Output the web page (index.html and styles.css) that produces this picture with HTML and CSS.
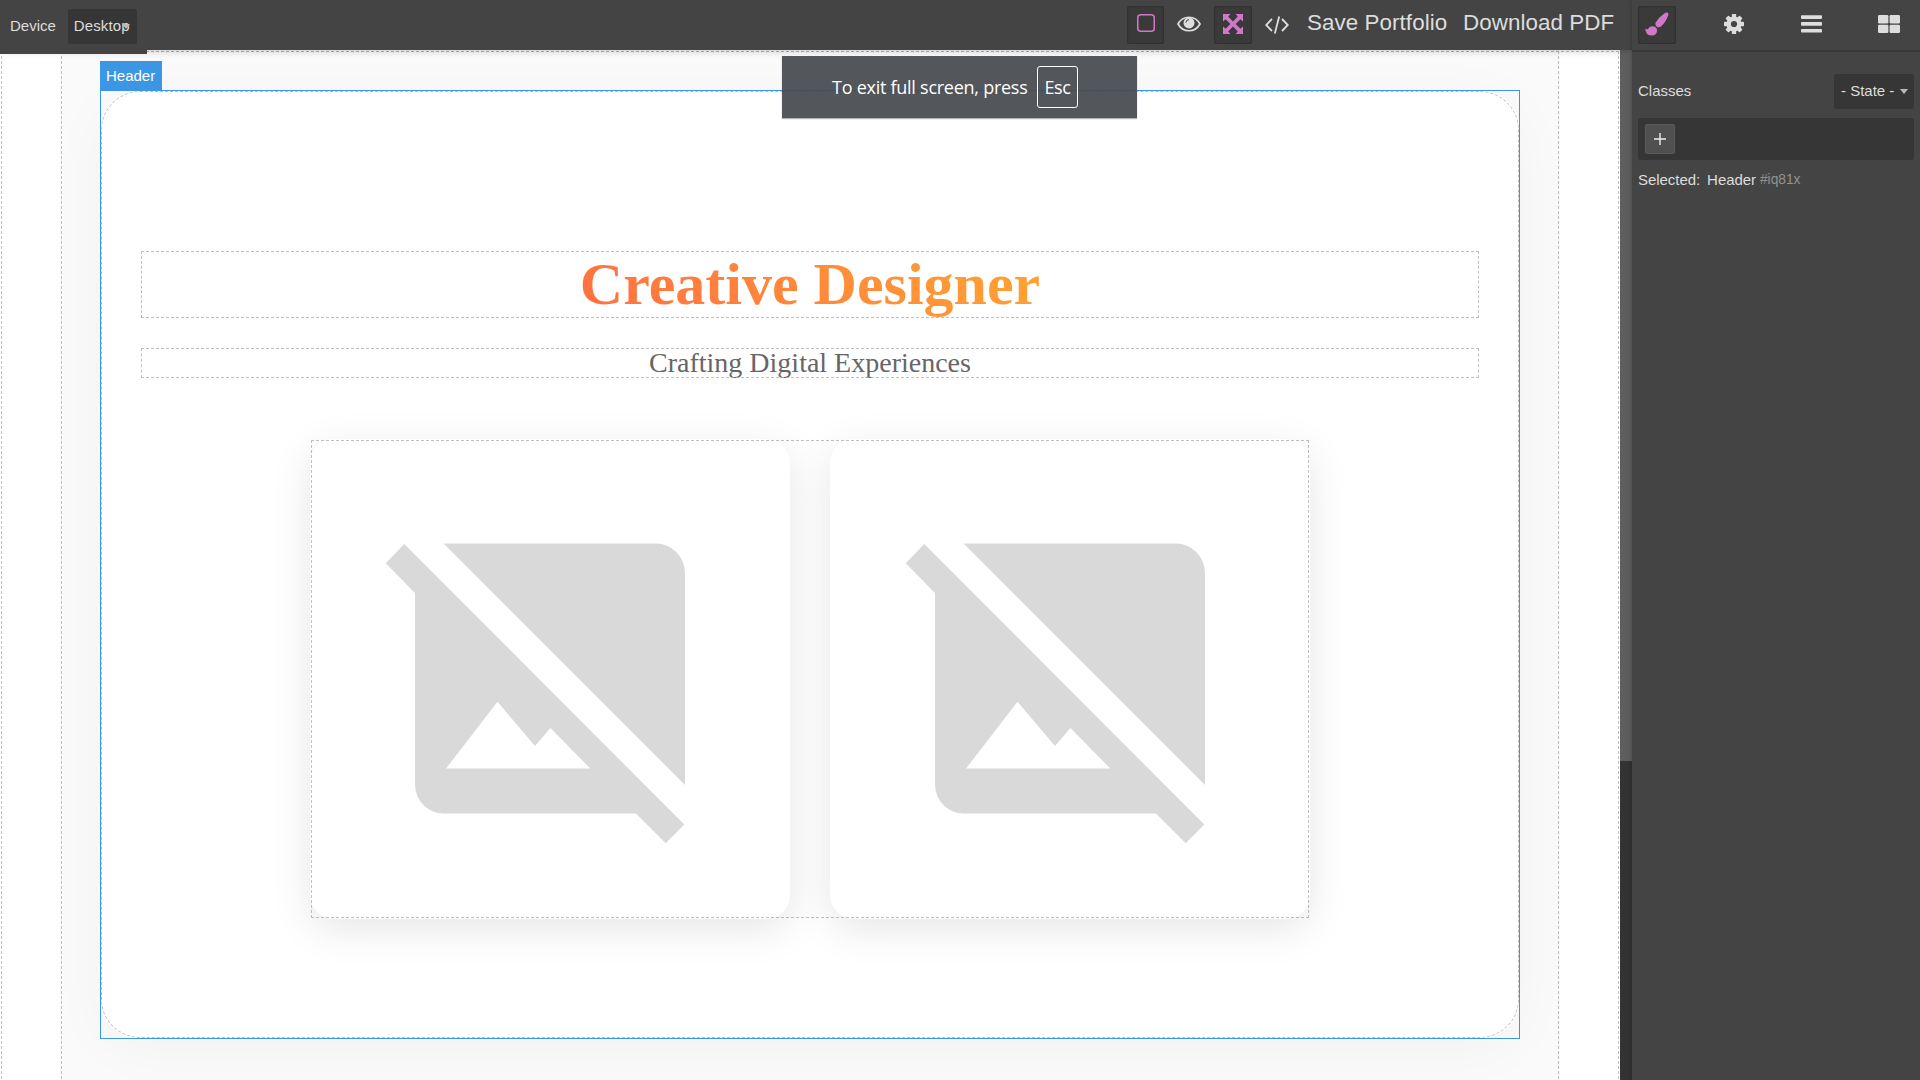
FILE: index.html
```
<!DOCTYPE html>
<html lang="en">
<head>
<meta charset="utf-8">
<title>Portfolio Editor</title>
<link rel="stylesheet" href="styles.css">
</head>
<body>
<div class="editor">
  <div class="main">
    <header class="topbar">
      <div class="devices">
        <span class="devices-label">Device</span>
        <div class="select device-select"><span>Desktop</span><i class="caret"></i></div>
      </div>
      <nav class="actions">
        <button class="tool active tool-outline"><svg viewBox="0 0 18 18" width="18" height="18"><rect x=".75" y=".75" width="16.5" height="16.5" rx="3" fill="none" stroke="currentColor" stroke-width="1.5"/></svg></button>
        <button class="tool tool-eye"><svg viewBox="0 0 24 16" width="24" height="16"><path d="M1 8C6-1 18-1 23 8C18 17 6 17 1 8Z" fill="none" stroke="currentColor" stroke-width="1.7"/><circle cx="12" cy="6.9" r="5.5" fill="currentColor"/><path d="M8.9 6.7A3.2 3.2 0 0 1 12 3.6" fill="none" stroke="#444" stroke-width="1"/></svg></button>
        <button class="tool active tool-full"><svg viewBox="0 0 20 20" width="20" height="20"><path d="M0 0H7.5L5.2 2.6L10 7.4L14.8 2.6L12.5 0H20V7.5L17.4 5.2L12.6 10L17.4 14.8L20 12.5V20H12.5L14.8 17.4L10 12.6L5.2 17.4L7.5 20H0V12.5L2.6 14.8L7.4 10L2.6 5.2L0 7.5Z" fill="currentColor"/></svg></button>
        <button class="tool tool-code"><svg viewBox="0 0 24 18" width="24" height="18"><path d="M7 3L1.2 9L7 15M17 3L22.8 9L17 15M14.2.5L9.8 17.5" fill="none" stroke="currentColor" stroke-width="1.8"/></svg></button>
        <span class="text-action save">Save Portfolio</span>
        <span class="text-action download">Download PDF</span>
      </nav>
    </header>
    <div class="canvas">
      <div class="page dashed">
        <div class="container dashed">
          <section class="hero dashed">
            <h1 class="hero-title dashed"><span class="gradient">Creative Designer</span></h1>
            <p class="hero-subtitle dashed">Crafting Digital Experiences</p>
            <div class="gallery dashed">
              <div class="card"><svg viewBox="0 0 480 480" width="480" height="480" fill="#d9d9d9"><path d="M94.3 104.9L75.7 124.2L105 153.9V345.3A28.6 29.3 0 0 0 133.6 374.6H326L355.7 404.2L374.3 385.6Z"/><path d="M133.6 104.6H346A29 29.5 0 0 1 375 134V346Z"/><path fill="#fff" d="M136 329.6L187.5 262.8L225 307L240.4 288.9L280.4 329.6Z"/></svg></div>
              <div class="card"><svg viewBox="0 0 480 480" width="480" height="480" fill="#d9d9d9"><path d="M94.3 104.9L75.7 124.2L105 153.9V345.3A28.6 29.3 0 0 0 133.6 374.6H326L355.7 404.2L374.3 385.6Z"/><path d="M133.6 104.6H346A29 29.5 0 0 1 375 134V346Z"/><path fill="#fff" d="M136 329.6L187.5 262.8L225 307L240.4 288.9L280.4 329.6Z"/></svg></div>
            </div>
            <span class="badge">Header</span>
          </section>
        </div>
      </div>
      <div class="scrollbar"><div class="thumb"></div></div>
    </div>
  </div>
  <aside class="panel">
    <nav class="tabs">
      <button class="tool active"><svg viewBox="0 0 24 24" width="24" height="24" fill="currentColor"><path d="M21.5.6Q24 .8 23.3 3.2Q20.5 10.5 16 14.5Q13.8 16 11.8 14.8Q9.8 13 10.5 10.8Q14 5 19.5 1.2Q20.5.5 21.5.6Z"/><path d="M.2 16.5Q1.5 18 3 16.9Q4.3 14.4 7 14.2Q11.5 14.4 12.2 18.2Q11.8 23.4 6.5 23.6Q.3 23 .2 16.5Z"/></svg></button>
      <button class="tool"><svg viewBox="-10 -10 20 20" width="20" height="20"><g fill="currentColor"><circle r="7.6"/><rect x="-2.2" y="-10" width="4.4" height="20" rx=".8"/><rect x="-2.2" y="-10" width="4.4" height="20" rx=".8" transform="rotate(45)"/><rect x="-2.2" y="-10" width="4.4" height="20" rx=".8" transform="rotate(90)"/><rect x="-2.2" y="-10" width="4.4" height="20" rx=".8" transform="rotate(135)"/></g><circle r="3.1" fill="#444"/></svg></button>
      <button class="tool"><svg viewBox="0 0 21 18" width="21" height="18" fill="currentColor"><rect y=".3" width="21" height="3.6" rx=".8"/><rect y="7.1" width="21" height="3.6" rx=".8"/><rect y="13.9" width="21" height="3.6" rx=".8"/></svg></button>
      <button class="tool"><svg viewBox="0 0 22 18" width="22" height="18" fill="currentColor"><rect width="10.4" height="8.5" rx="1.3"/><rect x="11.6" width="10.4" height="8.5" rx="1.3"/><rect y="9.7" width="10.4" height="8.3" rx="1.3"/><rect x="11.6" y="9.7" width="10.4" height="8.3" rx="1.3"/></svg></button>
    </nav>
    <div class="selector">
      <div class="selector-head"><span class="classes">Classes</span><div class="select state-select"><span>- State -</span><i class="caret"></i></div></div>
      <div class="tags"><button class="add"><svg viewBox="0 0 12 12" width="12" height="12"><path d="M6 0V12M0 6H12" stroke="currentColor" stroke-width="1.4"/></svg></button></div>
      <div class="selected"><span>Selected:</span><span class="sel-name">Header</span><span class="sel-id">#iq81x</span></div>
    </div>
  </aside>
</div>
<div class="toast"><span class="toast-text">To exit full screen, press</span><kbd class="key">Esc</kbd></div>
</body>
</html>
```
FILE: styles.css
```
* { box-sizing: border-box; }
body { margin: 0; overflow: hidden; background: #444; color: #ddd; font: 15px/18px "Liberation Sans", Arial, sans-serif; }
button { border: 0; background: none; font: inherit; }
svg { display: block; }
.editor { display: flex; width: 1920px; height: 1080px; }
.main { display: flex; flex-direction: column; width: 1632px; }
.topbar { position: relative; z-index: 2; display: flex; justify-content: space-between; height: 50px; background: #444; box-shadow: 0 0 8px rgba(0, 0, 0, .25); }
.devices { display: flex; align-items: center; gap: 12px; width: 147px; height: 54px; padding: 0 10px 2px; background: #444; white-space: nowrap; }
.select { position: relative; display: flex; align-items: center; height: 35px; border-radius: 2px; background: #363636; }
.device-select { width: 69px; padding-left: 6px; letter-spacing: .1px; }
.caret { position: absolute; border: 4px solid transparent; border-top: 5px solid #bbb; border-bottom: 0; }
.device-select .caret { right: 7px; top: 15px; }
.actions { display: flex; align-items: flex-start; padding-top: 6px; width: 505px; }
.tool { display: grid; place-items: center; flex: none; width: 38px; height: 38px; padding: 0; border-radius: 2px; color: #ddd; }
.tool.active { background: #3a3a3a; color: #d278c9; box-shadow: inset 0 0 3px rgba(0, 0, 0, .35); }
.tool-outline { width: 37px; padding-bottom: 4px; }
.tool-eye { width: 50px; padding-bottom: 2px; }
.tool-full { padding-bottom: 2px; }
.tool-code { width: 50px; padding-bottom: 1px; }
.text-action { font-size: 22.4px; line-height: 34px; white-space: nowrap; }
.save { width: 157px; padding-left: 5px; letter-spacing: .06px; }
.download { padding-left: 4px; letter-spacing: .06px; }
.canvas { display: flex; height: 1030px; overflow: hidden; }
.dashed { position: relative; }
.dashed::after { content: ""; position: absolute; inset: 0; border-radius: inherit; outline: 1px dashed rgba(170, 170, 170, .75); outline-offset: -2px; pointer-events: none; }
.page { width: 1620px; height: 1200px; padding: 0 60px; background: #fff; }
.container { height: 1200px; padding: 40px; background: #fafafa; }
.hero { height: 949px; padding: 160px 40px 0; border-radius: 40px; background: #fff; box-shadow: 0 10px 60px rgba(0, 0, 0, .035); }
.hero::before { content: ""; position: absolute; inset: 0; border: 1px solid #3b97e3; }
.hero-title { height: 69px; margin: 0; text-align: center; font: bold 60px/69px "Liberation Serif", "Times New Roman", serif; }
.gradient { background: linear-gradient(45deg, #ff6f42, #ffa532); -webkit-background-clip: text; background-clip: text; color: transparent; }
.hero-subtitle { height: 32px; margin: 28px 0 60px; color: #666; text-align: center; font: 28px/32px "Liberation Serif", "Times New Roman", serif; }
.gallery { display: flex; gap: 40px; width: 1000px; height: 480px; margin: 0 auto; }
.card { width: 480px; height: 480px; border-radius: 24px; background: #fff; box-shadow: 0 10px 40px rgba(0, 0, 0, .1); }
.badge { position: absolute; left: 0; top: -29px; width: 62px; height: 29px; padding-left: 6px; line-height: 29px; background: #3b97e3; color: #fff; }
.scrollbar { width: 12px; background: #333; }
.thumb { height: 711px; background: #5e5e5e; }
.panel { position: relative; z-index: 3; width: 288px; background: #444; box-shadow: 0 0 5px rgba(0, 0, 0, .25); }
.tabs { display: flex; justify-content: space-between; height: 52px; padding: 6px 12px 0 6px; border-bottom: 2px solid #393939; }
.tabs .tool { padding-bottom: 2px; }
.selector { padding: 22px 6px; }
.selector-head { display: flex; align-items: center; justify-content: space-between; height: 35px; }
.classes { padding-bottom: 2px; }
.state-select { width: 80px; padding: 0 0 2px 7px; }
.state-select .caret { right: 6px; top: 15px; }
.tags { display: flex; height: 42px; margin-top: 9px; padding: 6px 7px; border-radius: 3px; background: #363636; }
.add { display: grid; place-items: center; width: 30px; height: 30px; padding: 0 1px 0 0; border: 1px solid #595959; border-radius: 2px; background: #505050; color: #eee; }
.selected { display: flex; margin-top: 11px; letter-spacing: -.05px; }
.sel-name { margin-left: 7px; }
.sel-id { margin-left: 4px; font-size: 13.8px; color: #929292; }
.toast { position: absolute; z-index: 5; left: 782px; top: 56px; display: flex; align-items: center; width: 355px; height: 62px; padding-left: 50px; background: rgba(72, 75, 80, .94); box-shadow: 0 1px 1px rgba(0, 0, 0, .3); color: #fff; font: 18px/24px "Open Sans", "Noto Sans", sans-serif; white-space: nowrap; }
.toast-text { width: 205px; letter-spacing: -.26px; }
.key { display: grid; place-items: center; width: 41px; height: 42px; border: 1.5px solid #fff; border-radius: 3px; font: inherit; letter-spacing: -.4px; }
```
